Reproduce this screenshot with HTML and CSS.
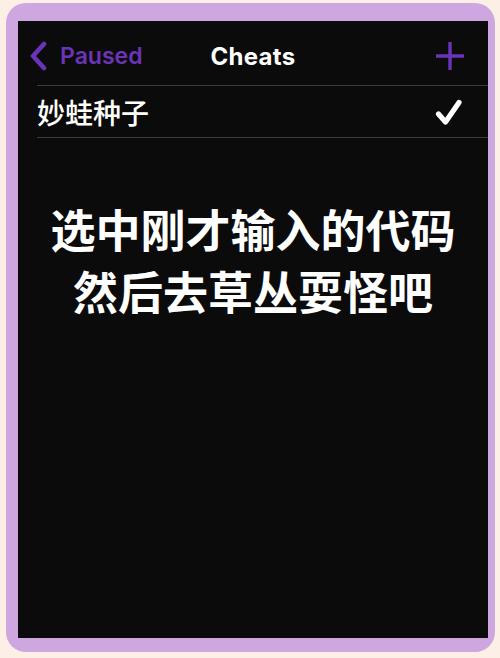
FILE: index.html
```html
<!DOCTYPE html>
<html lang="zh">
<head>
<meta charset="utf-8">
<link rel="stylesheet" href="styles.css">
</head>
<body>
<div class="frame">
  <div class="screen">
    <div class="nav">
      <div class="back">
        <svg class="chev" width="18" height="30" viewBox="0 0 18 30"><path d="M15 3 L4 15 L15 27" fill="none" stroke="#6b34b8" stroke-width="4.6" stroke-linecap="round" stroke-linejoin="round"/></svg>
        <span class="back-label">Paused</span>
      </div>
      <div class="title">Cheats</div>
      <svg class="plus" width="28" height="28" viewBox="0 0 28 28"><path d="M14 1 V27 M1 14 H27" fill="none" stroke="#6b34b8" stroke-width="3.4" stroke-linecap="round"/></svg>
    </div>
    <div class="sep"></div>
    <div class="row">
      <span class="row-label">妙蛙种子</span>
      <svg class="check" width="28" height="28" viewBox="0 0 28 28"><path d="M3.5 16 L10.5 24 L24 4.5" fill="none" stroke="#ffffff" stroke-width="5.2" stroke-linecap="round" stroke-linejoin="round"/></svg>
    </div>
    <div class="sep"></div>
    <div class="caption">
      <div>选中刚才输入的代码</div>
      <div>然后去草丛耍怪吧</div>
    </div>
  </div>
</div>
</body>
</html>
```

FILE: styles.css
```css
html, body {
  margin: 0;
  padding: 0;
}
body {
  background: #fcf0e6;
  width: 500px;
  height: 658px;
  overflow: hidden;
  font-family: "Inter", "Liberation Sans", "Noto Sans CJK SC", sans-serif;
}
.frame {
  margin: 3px 5px 0 6px;
  height: 649px;
  box-sizing: border-box;
  background: #cea7e0;
  border-radius: 20px;
  padding: 18px 7px 14px 12px;
}
.screen {
  background: #0b0b0b;
  height: 100%;
  display: flex;
  flex-direction: column;
}
.nav {
  height: 64px;
  box-sizing: border-box;
  padding: 6px 24px 0 11px;
  display: flex;
  align-items: center;
  position: relative;
}
.back {
  display: flex;
  align-items: center;
  gap: 13px;
}
.back-label {
  color: #6b34b8;
  font-size: 23px;
  font-weight: 600;
  letter-spacing: 0;
}
.title {
  position: absolute;
  left: 0;
  right: 0;
  top: 6px;
  bottom: 0;
  display: flex;
  align-items: center;
  justify-content: center;
  color: #ffffff;
  font-size: 24px;
  font-weight: 700;
  letter-spacing: 0.3px;
  pointer-events: none;
}
.plus {
  margin-left: auto;
}
.sep {
  height: 1px;
  background: #3c3c3c;
  margin-left: 19px;
}
.row {
  height: 51px;
  display: flex;
  align-items: center;
  padding: 0 25px 0 19px;
}
.row-label {
  color: #ffffff;
  font-family: "Noto Sans CJK SC", sans-serif;
  font-size: 28px;
  font-weight: 500;
}
.check {
  margin-left: auto;
}
.caption {
  margin-top: 60px;
  color: #ffffff;
  font-family: "Noto Sans CJK SC", sans-serif;
  font-weight: 700;
  font-size: 45px;
  line-height: 62px;
  text-align: center;
}
```
